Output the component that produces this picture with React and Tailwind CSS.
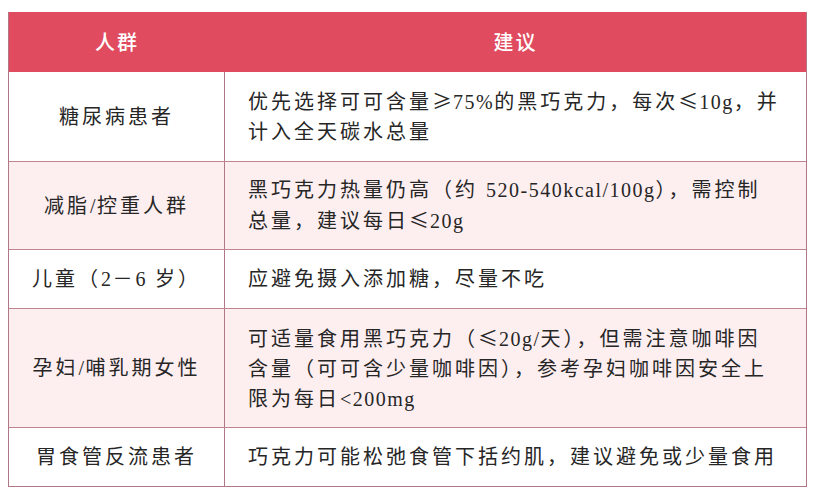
function T({ s }) {
  const parts = s.split(/([A-Za-z0-9%\-\/<.]+|[≤≥])/).filter((p) => p !== "");
  return (
    <>
      {parts.map((p, i) => {
        if (p === "≤" || p === "≥")
          return (
            <span key={i} className="font-['Noto_Sans_CJK_SC',sans-serif] tracking-[1px]">
              {p}
            </span>
          );
        if (/^[A-Za-z0-9%\-\/<.]+$/.test(p))
          return (
            <span key={i} className="tracking-[1.5px]">
              {p}
            </span>
          );
        return <span key={i}>{p}</span>;
      })}
    </>
  );
}

export default function App() {
  const rows = [
    { h: "h-[89px]", bg: "bg-white", left: "糖尿病患者", right: ["优先选择可可含量≥75%的黑巧克力，每次≤10g，并", "计入全天碳水总量"] },
    { h: "h-[88px]", bg: "bg-[#fdeef0]", left: "减脂/控重人群", right: ["黑巧克力热量仍高（约 520-540kcal/100g），需控制", "总量，建议每日≤20g"] },
    { h: "h-[59px]", bg: "bg-white", left: "儿童（2－6 岁）", right: ["应避免摄入添加糖，尽量不吃"] },
    { h: "h-[119px]", bg: "bg-[#fdeef0]", left: "孕妇/哺乳期女性", right: ["可适量食用黑巧克力（≤20g/天），但需注意咖啡因", "含量（可可含少量咖啡因），参考孕妇咖啡因安全上", "限为每日<200mg"] },
    { h: "h-[59px]", bg: "bg-white", left: "胃食管反流患者", right: ["巧克力可能松弛食管下括约肌，建议避免或少量食用"] },
  ];
  return (
    <div className="w-[818px] h-[501px] bg-white pt-[12px] pl-[8px] font-['Liberation_Serif','Noto_Sans_CJK_SC',serif] text-[#262626]">
      <div className="w-[799px] border border-[#b07886] border-t-0">
        <div className="flex h-[60px] bg-[#e04b5f] text-white text-[20px] font-['Noto_Sans_CJK_SC',sans-serif] font-medium tracking-[2px]">
          <div className="w-[216px] flex items-center justify-center">人群</div>
          <div className="flex-1 flex items-center justify-center">建议</div>
        </div>
        {rows.map((r, i) => (
          <div key={i} className={`flex ${r.h} ${r.bg} ${i > 0 ? "border-t border-[#c08592]" : ""}`}>
            <div className="w-[216px] shrink-0 flex items-center justify-center text-[20px] tracking-[3px] whitespace-nowrap border-r border-[#b07886]">
              <div>
                <T s={r.left} />
              </div>
            </div>
            <div className="flex-1 flex flex-col justify-center pl-[23px] text-[20px] leading-[30px] tracking-[3px] whitespace-nowrap">
              {r.right.map((l, j) => (
                <div key={j}>
                  <T s={l} />
                </div>
              ))}
            </div>
          </div>
        ))}
      </div>
    </div>
  );
}
